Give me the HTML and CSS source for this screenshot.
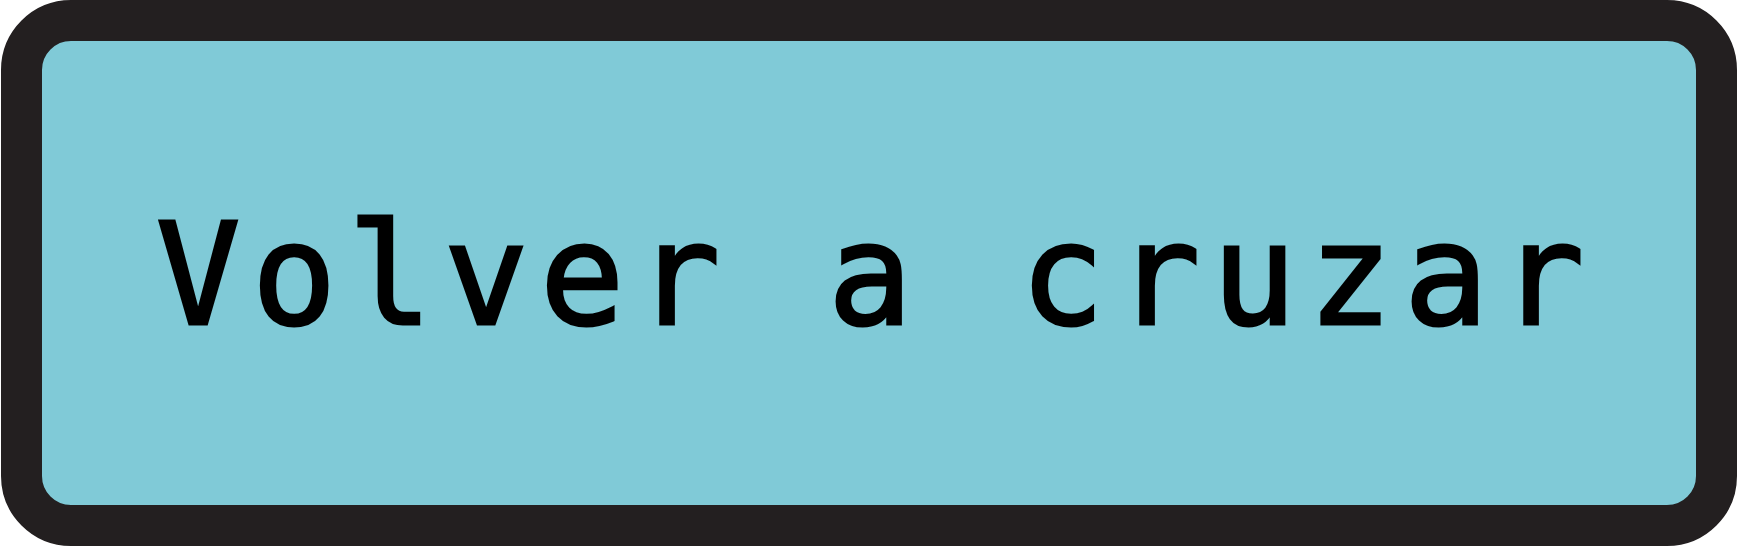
FILE: index.html
```html
<!DOCTYPE html>
<html lang="es">
<head>
<meta charset="utf-8">
<title>Volver a cruzar</title>
<link rel="stylesheet" href="styles.css">
</head>
<body>
<div class="button">
  <span class="label">Volver a cruzar</span>
</div>
</body>
</html>
```
FILE: styles.css
```css
html, body {
  margin: 0;
  padding: 0;
  background: #ffffff;
}
body {
  width: 1738px;
  height: 547px;
  overflow: hidden;
}
.button {
  box-sizing: border-box;
  margin-left: 1px;
  width: 1736px;
  height: 546px;
  border: 41px solid #231f20;
  border-radius: 70px;
  background: #80cad7;
  display: flex;
  align-items: center;
  justify-content: center;
}
.label {
  font-family: "DejaVu Sans Mono", monospace;
  font-size: 140px;
  line-height: 1;
  letter-spacing: 11.7px;
  color: #000000;
  -webkit-text-stroke: 3px #000000;
  white-space: pre;
  padding-left: 14px;
  padding-top: 6px;
}
```
